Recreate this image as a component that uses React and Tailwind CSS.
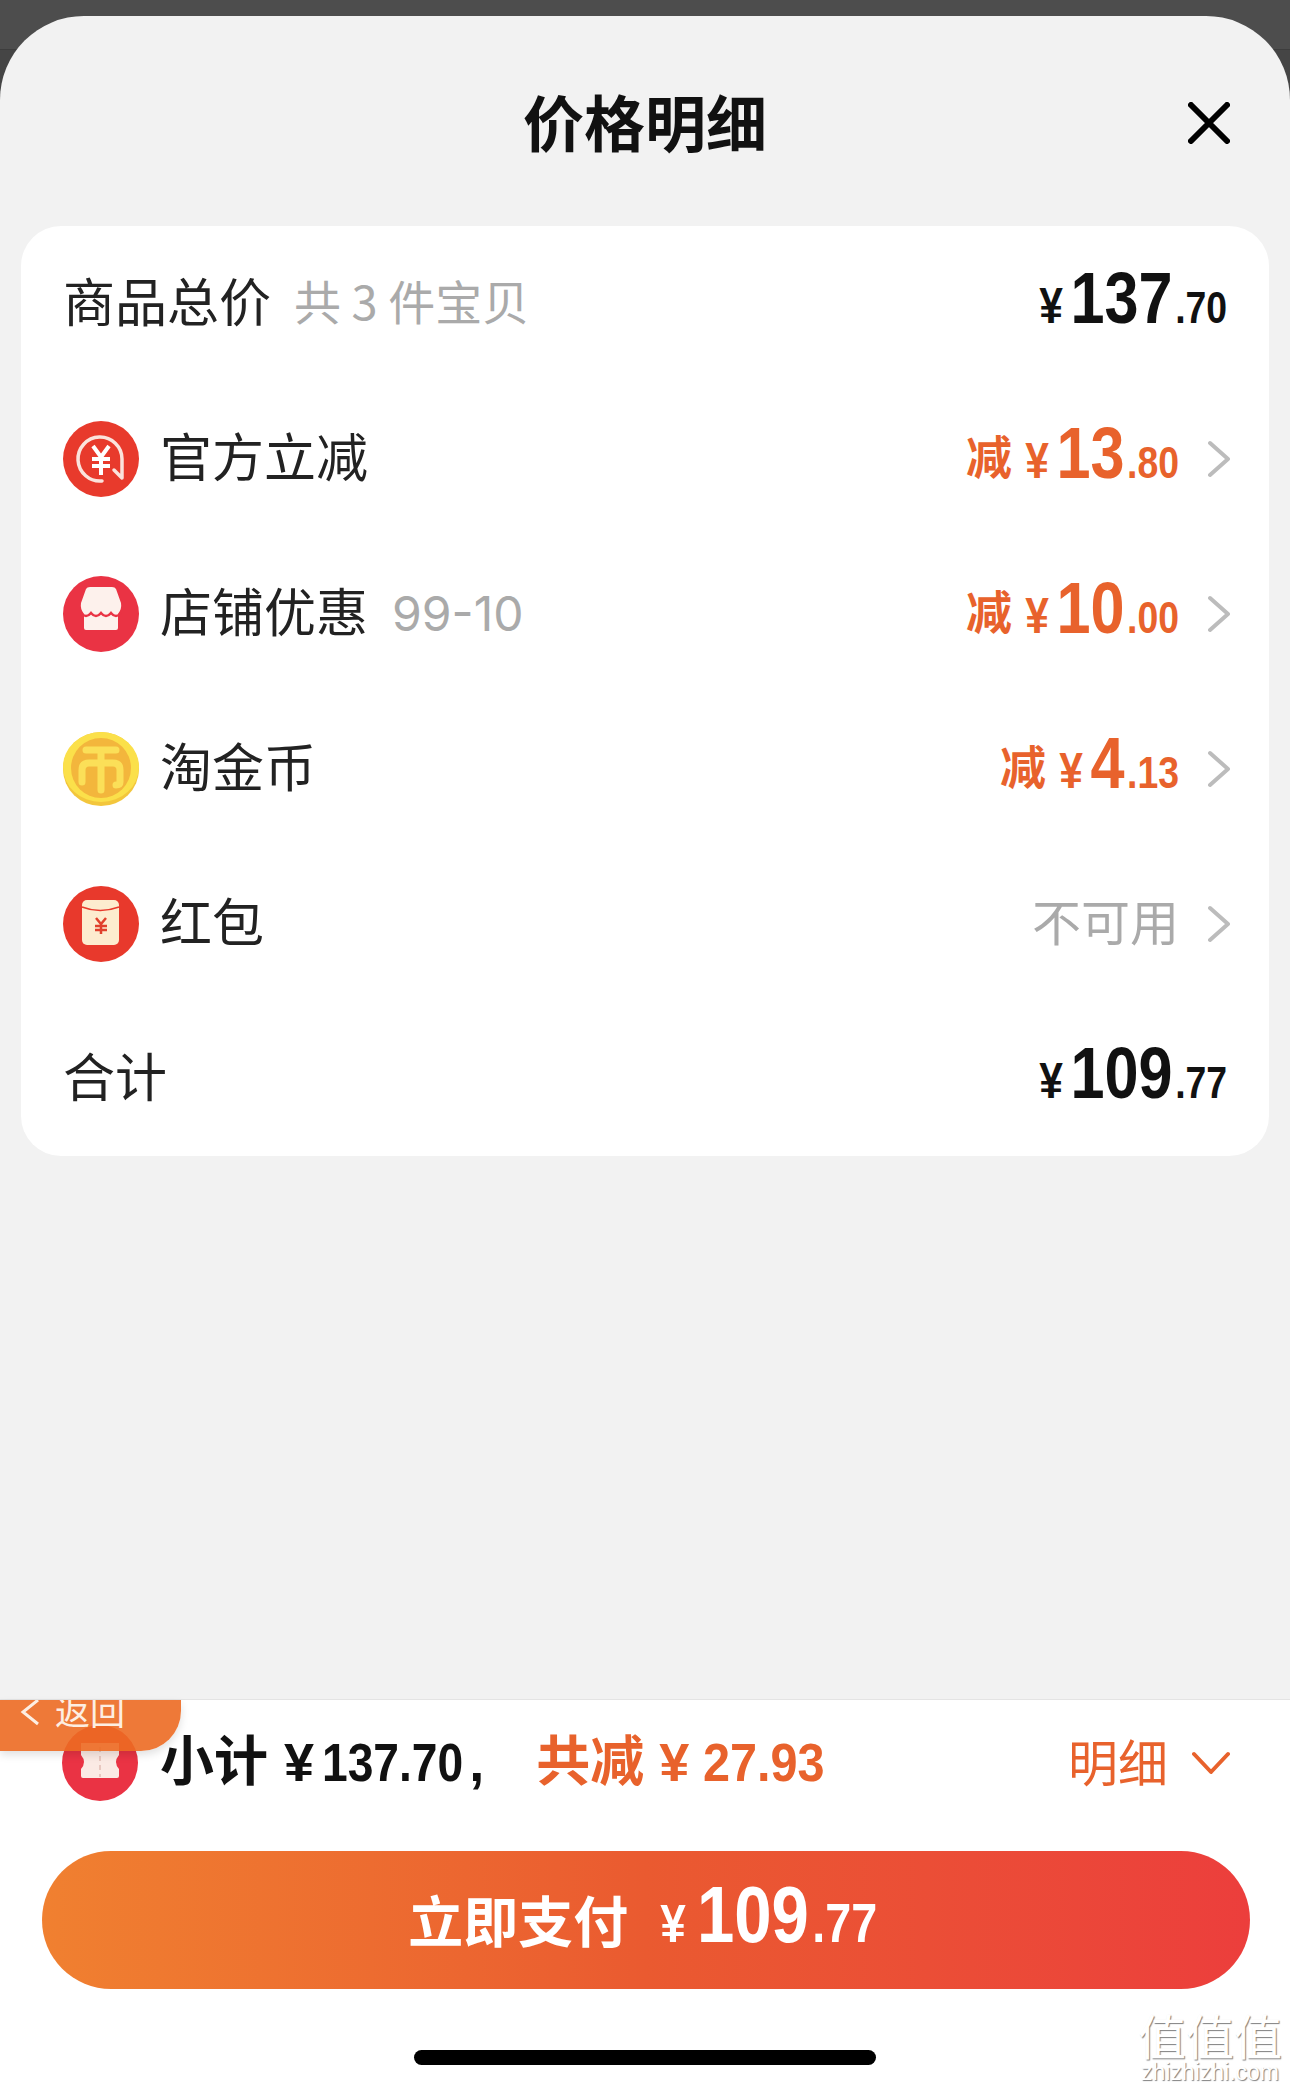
const cjk = "font-['Noto_Sans_CJK_SC','Liberation_Sans',sans-serif]";
const num = "font-['Liberation_Sans','Noto_Sans_CJK_SC',sans-serif]";

function Chevron() {
  return (
    <svg width="22" height="38" viewBox="0 0 22 38" fill="none" stroke="#bcbcbc" strokeWidth="4" strokeLinecap="round" strokeLinejoin="round">
      <path d="M2 3l18 16L2 35" />
    </svg>
  );
}

function IconOfficial() {
  return (
    <svg width="76" height="76" viewBox="0 0 76 76" fill="none">
      <circle cx="38" cy="38" r="38" fill="#e83a2c" />
      <path d="M39 60A22 22 0 1 1 59 38V57L51 49" stroke="#fbe3dc" strokeWidth="3.5" strokeLinecap="round" strokeLinejoin="round" />
      <path d="M30 25l8 11 8-11M29 38h18M29 45h18M38 36v18" stroke="#fff" strokeWidth="4" />
    </svg>
  );
}

function IconShop() {
  return (
    <svg width="76" height="76" viewBox="0 0 76 76" fill="none">
      <circle cx="38" cy="38" r="38" fill="#ea3344" />
      <path d="M27 11h22q3 0 4 2l5 14q1 6-3 11v14q0 2-2 2H23q-2 0-2-2V38q-4-5-3-11l5-14q1-2 4-2z" fill="#fdf1ec" />
      <path d="M18 37q5 6 10 0q5 6 10 0q5 6 10 0q5 6 10 0" stroke="#ea3344" strokeWidth="2.5" />
    </svg>
  );
}

function IconCoin() {
  return (
    <svg width="76" height="74" viewBox="0 0 76 74" fill="none">
      <ellipse cx="38" cy="37" rx="38" ry="37" fill="#f3c63c" />
      <ellipse cx="38" cy="35" rx="38" ry="35" fill="#fbe04a" />
      <circle cx="38" cy="36" r="30" fill="#f3b63c" />
      <path d="M23 18h30M38 20v38M19 50V38q0-7 7-7h24q7 0 7 7v12q0 3-4 3" stroke="#fbdf58" strokeWidth="7" strokeLinecap="round" />
    </svg>
  );
}

function IconPacket() {
  return (
    <svg width="76" height="76" viewBox="0 0 76 76" fill="none">
      <circle cx="38" cy="38" r="38" fill="#e8392c" />
      <rect x="19" y="14" width="37" height="45" rx="5" fill="#fdeccf" />
      <path d="M19 21q18 7 37 0" stroke="#e8392c" strokeWidth="1.5" />
      <path d="M33 32l5 6 5-6M32 40h12M32 44h12M38 38v10" stroke="#e0402c" strokeWidth="2.5" />
    </svg>
  );
}

function IconTicket() {
  return (
    <svg width="76" height="76" viewBox="0 0 76 76" fill="none">
      <circle cx="38" cy="38" r="38" fill="#ea3344" />
      <path d="M19 18h38v12q-6 7 0 14v7q0 2-2 2H21q-2 0-2-2v-7q6-7 0-14z" fill="#fbeae4" />
      <path d="M38 22v30" stroke="#e8c8c0" strokeWidth="2" strokeDasharray="5 4" />
    </svg>
  );
}

// no condensed font on the box, so the numbers are squeezed from the right edge
function Price({
  int,
  dec,
  color = 'text-[#111]',
  shift = '-ml-[33px]',
  yen = 'text-[50px] mr-[9px]',
  big = 'text-[72px]',
  small = 'text-[44px] ml-[3px]',
}) {
  return (
    <span className={`${num} ${color} ${shift} flex origin-right scale-x-[0.85] -translate-y-[6px] items-baseline font-bold leading-none`}>
      <span className={yen}>¥</span>
      <span className={big}>{int}</span>
      <span className={small}>.{dec}</span>
    </span>
  );
}

function Discount({ int, dec, shift }) {
  return (
    <div className="flex items-baseline">
      <span className={`${cjk} -translate-y-[10px] text-[46px] font-bold leading-none text-[#e8622c] mr-[13px]`}>减</span>
      <Price int={int} dec={dec} color="text-[#e8622c]" shift={shift} />
    </div>
  );
}

const rows = [
  { icon: <IconOfficial />, label: '官方立减', int: '13', dec: '80', shift: '-ml-[27px]' },
  { icon: <IconShop />, label: '店铺优惠', note: '99-10', int: '10', dec: '00', shift: '-ml-[27px]' },
  { icon: <IconCoin />, label: '淘金币', int: '4', dec: '13', shift: '-ml-[21px]' },
  { icon: <IconPacket />, label: '红包' },
];

export default function App() {
  return (
    <div className={`${cjk} relative h-[2089px] w-[1290px] overflow-hidden bg-[#454545]`}>
      <div className="absolute inset-x-0 top-0 h-[50px] bg-[#4d4d4d] border-b border-[#3d3d3d]" />
      <div className="relative mt-4 flex h-[2073px] flex-col rounded-t-[84px] bg-[#f2f2f2]">
        {/* Header */}
        <div className="relative flex h-[210px] items-center justify-center">
          <h1 className="mb-[2px] text-[61px] font-bold leading-none text-[#111]">价格明细</h1>
          <svg className="absolute right-[60px] top-[86px]" width="42" height="42" viewBox="0 0 42 42" fill="none" stroke="#000" strokeWidth="6" strokeLinecap="round">
            <path d="M3 3l36 36M39 3L3 39" />
          </svg>
        </div>

        {/* Card */}
        <div className="mx-[21px] rounded-[40px] bg-white">
          <div className="flex h-[155px] items-center justify-between pl-[42px] pr-[42px]">
            <div className="-mt-[8px] flex items-center text-[52px] leading-none">
              <span className="text-[#222]">商品总价</span>
              <span className="ml-[23px] text-[47px] text-[#aaa]">共 3 件宝贝</span>
            </div>
            <Price int="137" dec="70" />
          </div>

          {rows.map(r => (
            <div key={r.label} className="flex h-[155px] items-center justify-between pl-[42px] pr-[39px]">
              <div className="flex items-center">
                <span className="flex w-[76px] justify-center">{r.icon}</span>
                <span className="ml-[21px] -translate-y-[4px] text-[52px] leading-none text-[#222]">{r.label}</span>
                {r.note && <span className="ml-[24px] font-['Inter',sans-serif] text-[48px] leading-none text-[#aaa]">{r.note}</span>}
              </div>
              <div className="flex items-center gap-[29px]">
                {r.int
                  ? <Discount int={r.int} dec={r.dec} shift={r.shift} />
                  : <span className="-translate-y-[4px] text-[49px] leading-none text-[#aaa]">不可用</span>}
                <Chevron />
              </div>
            </div>
          ))}

          <div className="flex h-[155px] items-center justify-between pl-[42px] pr-[42px]">
            <span className="-translate-y-[4px] text-[52px] leading-none text-[#222]">合计</span>
            <Price int="109" dec="77" />
          </div>
        </div>

        {/* Footer */}
        <div className="relative mt-auto h-[390px] border-t border-[#e4e4e4] bg-white">
          <div className="flex items-center pl-[62px] pr-[60px] pt-[25px]">
            <IconTicket />
            <div className={`${num} ml-[22px] flex -translate-y-[1px] items-baseline font-bold leading-none text-[54px]`}>
              <span className="text-[#111]">小计</span>
              <span className="ml-[16px] text-[#111]">¥</span>
              <span className="ml-[8px] -mr-[24px] origin-left scale-x-[0.855] text-[#111]">137.70</span>
              <span className="ml-[6px] text-[#111]">,</span>
              <span className="ml-[52px] text-[#e8622c]">共减</span>
              <span className="ml-[15px] text-[#e8622c]">¥</span>
              <span className="ml-[14px] -mr-[13px] origin-left scale-x-[0.9] text-[#e8622c]">27.93</span>
            </div>
            <span className="ml-auto -translate-y-[3px] text-[50px] leading-none text-[#e8622c]">明细</span>
            <svg className="ml-[24px]" width="38" height="24" viewBox="0 0 38 24" fill="none" stroke="#e8622c" strokeWidth="4" strokeLinecap="round" strokeLinejoin="round">
              <path d="M2 3l17 18L36 3" />
            </svg>
          </div>

          <button className="mx-[42px] mt-[50px] flex h-[138px] w-[1208px] items-center justify-center rounded-full bg-gradient-to-r from-[#f08030] via-[#ea5a30] to-[#ec3e3c] pr-[6px] text-white">
            <span className="flex items-baseline font-bold leading-none">
              <span className="-translate-y-[6px] text-[55px]">立即支付</span>
              <span className="ml-[32px]">
                <Price
                  int="109"
                  dec="77"
                  color="text-white"
                  shift="-ml-[38px]"
                  yen="text-[54px] mr-[13px]"
                  big="text-[79px]"
                  small="text-[55px] ml-[4px]"
                />
              </span>
            </span>
          </button>

          <div className="mx-auto mt-[61px] h-[15px] w-[462px] rounded-full bg-black" />

          {/* Back tab sits over the ticket icon */}
          <div className="absolute left-0 top-0 flex h-[51px] w-[181px] items-start overflow-hidden rounded-br-[40px] bg-[#ec6a22]/90 pl-[20px] shadow-[0_4px_8px_rgba(0,0,0,0.12)]">
            <svg className="-mt-[2px]" width="20" height="28" viewBox="0 0 20 28" fill="none" stroke="#fdeee2" strokeWidth="3">
              <path d="M18 2L3 14l15 12" />
            </svg>
            <span className="ml-[15px] -mt-[10px] text-[35px] leading-[40px] text-[#fdeee2]">返回</span>
          </div>

          {/* Watermark */}
          <div className="absolute bottom-[5px] right-[8px] flex flex-col items-center text-white [text-shadow:1px_1px_1px_rgba(0,0,0,0.5)]">
            <span className="text-[48px] leading-[52px]">值值值</span>
            <span className="font-['Liberation_Sans',sans-serif] text-[23px] leading-[24px]">zhizhizhi.com</span>
          </div>
        </div>
      </div>
    </div>
  );
}
